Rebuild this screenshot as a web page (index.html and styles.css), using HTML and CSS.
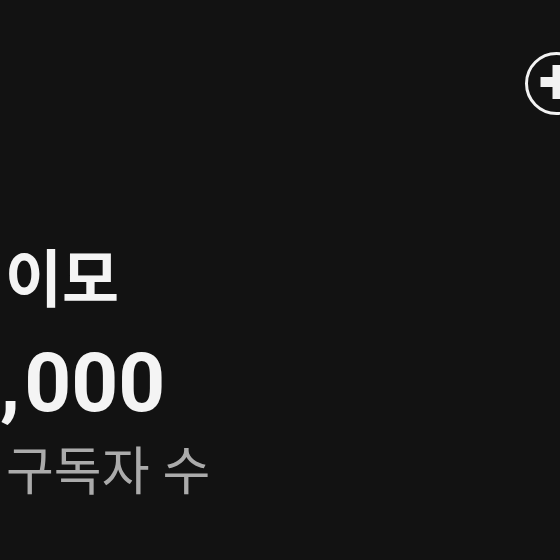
FILE: index.html
```html
<!DOCTYPE html>
<html lang="ko">
<head>
    <meta charset="UTF-8">
    <meta name="viewport" content="width=device-width, initial-scale=1.0">
    <title>채널 프로필</title>
    <link rel="stylesheet" href="styles.css">
</head>
<body>
    <div class="profile">
        <!-- Top bar: add button -->
        <div class="top-bar">
            <button class="add-btn" aria-label="추가">
                <svg width="63" height="63" viewBox="0 0 63 63">
                    <circle cx="31.5" cy="31.5" r="30" fill="none" stroke="#f2f2f2" stroke-width="3"/>
                    <rect x="15.5" y="25" width="34" height="10" fill="#f2f2f2"/>
                    <rect x="27.5" y="13" width="10" height="34" fill="#f2f2f2"/>
                </svg>
            </button>
        </div>

        <!-- Channel info -->
        <div class="info">
            <h1 class="name">미이모</h1>
            <p class="count">10<span class="sep">,</span>000</p>
            <p class="label">구독자 수</p>
        </div>
    </div>
</body>
</html>
```

FILE: styles.css
```css
body {
    margin: 0;
    width: 560px;
    height: 560px;
    overflow: hidden;
    background-color: #121212;
    color: #f4f4f4;
    font-family: Roboto, "Noto Sans CJK KR", sans-serif;
}
.profile {
    display: flex;
    flex-direction: column;
}
.top-bar {
    display: flex;
    justify-content: flex-end;
    padding-top: 52px;
    margin-right: -28px;
}
.add-btn {
    width: 63px;
    height: 63px;
    padding: 0;
    border: none;
    background: none;
    cursor: pointer;
}
.add-btn svg {
    display: block;
}
.info {
    display: flex;
    flex-direction: column;
    padding-top: 128px;
}
.name {
    margin: 0 0 0 -52px;
    font-size: 62px;
    font-weight: 700;
    line-height: 76px;
    white-space: nowrap;
}
.count {
    margin: 14px 0 0 -94px;
    font-size: 82px;
    font-weight: 700;
    line-height: 100px;
    white-space: nowrap;
}
.count .sep {
    margin-right: 4px;
}
.label {
    margin: 10px 0 0 6px;
    font-size: 52px;
    line-height: 60px;
    color: #ababab;
    white-space: nowrap;
}
```
